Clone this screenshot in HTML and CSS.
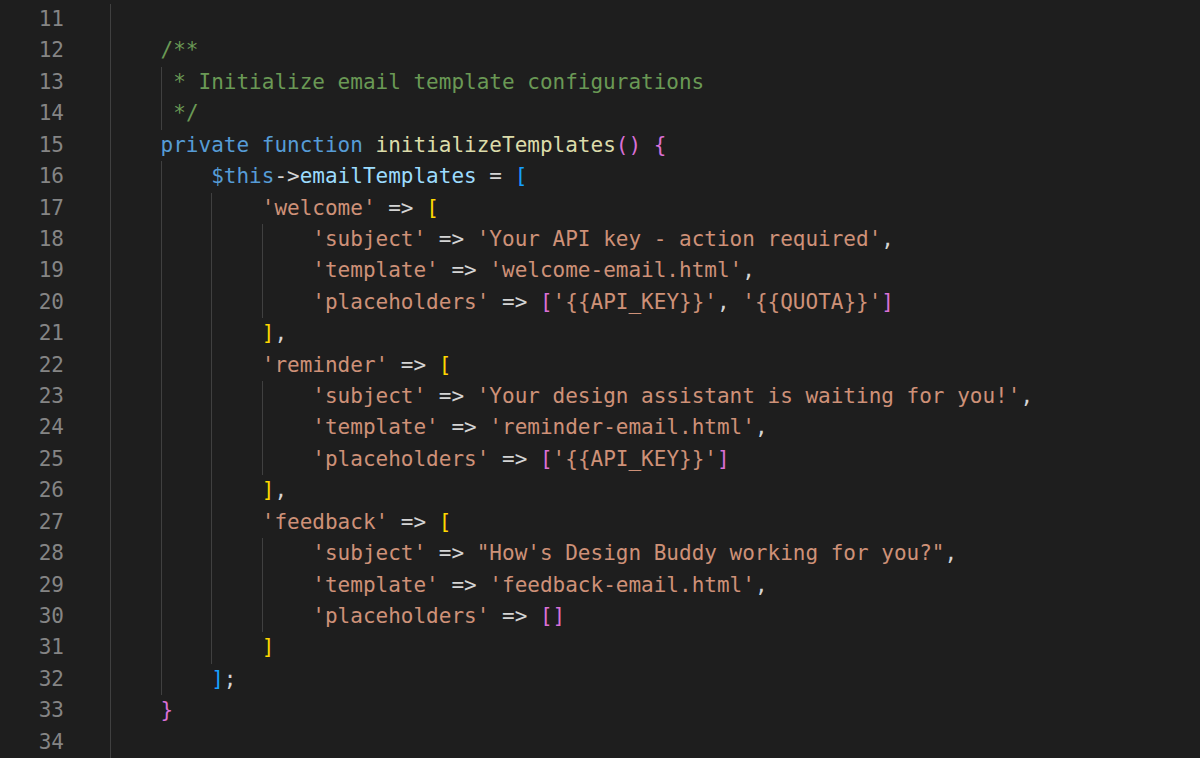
FILE: index.html
```html
<!DOCTYPE html>
<html>
<head>
<meta charset="utf-8">
<link rel="stylesheet" href="styles.css">
</head>
<body>
<div class="editor">
  <div class="gutter">
    <div class="ln">11</div><div class="ln">12</div><div class="ln">13</div><div class="ln">14</div>
    <div class="ln">15</div><div class="ln">16</div><div class="ln">17</div><div class="ln">18</div>
    <div class="ln">19</div><div class="ln">20</div><div class="ln">21</div><div class="ln">22</div>
    <div class="ln">23</div><div class="ln">24</div><div class="ln">25</div><div class="ln">26</div>
    <div class="ln">27</div><div class="ln">28</div><div class="ln">29</div><div class="ln">30</div>
    <div class="ln">31</div><div class="ln">32</div><div class="ln">33</div><div class="ln">34</div>
  </div>
  <div class="code">
<div class="line"><span class="ind">    </span></div>
<div class="line"><span class="ind">    </span><span class="cm">/**</span></div>
<div class="line"><span class="ind">    </span><span class="ind"> </span><span class="cm">* Initialize email template configurations</span></div>
<div class="line"><span class="ind">    </span><span class="ind"> </span><span class="cm">*/</span></div>
<div class="line"><span class="ind">    </span><span class="kw">private</span> <span class="kw">function</span> <span class="fn">initializeTemplates</span><span class="b2">()</span> <span class="b2">{</span></div>
<div class="line"><span class="ind">    </span><span class="ind">    </span><span class="kw">$this</span><span class="op">-&gt;</span><span class="var">emailTemplates</span> <span class="op">=</span> <span class="b3">[</span></div>
<div class="line"><span class="ind">    </span><span class="ind">    </span><span class="ind">    </span><span class="str">'welcome'</span> <span class="op">=&gt;</span> <span class="b1">[</span></div>
<div class="line"><span class="ind">    </span><span class="ind">    </span><span class="ind">    </span><span class="ind">    </span><span class="str">'subject'</span> <span class="op">=&gt;</span> <span class="str">'Your API key - action required'</span><span class="op">,</span></div>
<div class="line"><span class="ind">    </span><span class="ind">    </span><span class="ind">    </span><span class="ind">    </span><span class="str">'template'</span> <span class="op">=&gt;</span> <span class="str">'welcome-email.html'</span><span class="op">,</span></div>
<div class="line"><span class="ind">    </span><span class="ind">    </span><span class="ind">    </span><span class="ind">    </span><span class="str">'placeholders'</span> <span class="op">=&gt;</span> <span class="b2">[</span><span class="str">'{{API_KEY}}'</span><span class="op">,</span> <span class="str">'{{QUOTA}}'</span><span class="b2">]</span></div>
<div class="line"><span class="ind">    </span><span class="ind">    </span><span class="ind">    </span><span class="b1">]</span><span class="op">,</span></div>
<div class="line"><span class="ind">    </span><span class="ind">    </span><span class="ind">    </span><span class="str">'reminder'</span> <span class="op">=&gt;</span> <span class="b1">[</span></div>
<div class="line"><span class="ind">    </span><span class="ind">    </span><span class="ind">    </span><span class="ind">    </span><span class="str">'subject'</span> <span class="op">=&gt;</span> <span class="str">'Your design assistant is waiting for you!'</span><span class="op">,</span></div>
<div class="line"><span class="ind">    </span><span class="ind">    </span><span class="ind">    </span><span class="ind">    </span><span class="str">'template'</span> <span class="op">=&gt;</span> <span class="str">'reminder-email.html'</span><span class="op">,</span></div>
<div class="line"><span class="ind">    </span><span class="ind">    </span><span class="ind">    </span><span class="ind">    </span><span class="str">'placeholders'</span> <span class="op">=&gt;</span> <span class="b2">[</span><span class="str">'{{API_KEY}}'</span><span class="b2">]</span></div>
<div class="line"><span class="ind">    </span><span class="ind">    </span><span class="ind">    </span><span class="b1">]</span><span class="op">,</span></div>
<div class="line"><span class="ind">    </span><span class="ind">    </span><span class="ind">    </span><span class="str">'feedback'</span> <span class="op">=&gt;</span> <span class="b1">[</span></div>
<div class="line"><span class="ind">    </span><span class="ind">    </span><span class="ind">    </span><span class="ind">    </span><span class="str">'subject'</span> <span class="op">=&gt;</span> <span class="str">"How's Design Buddy working for you?"</span><span class="op">,</span></div>
<div class="line"><span class="ind">    </span><span class="ind">    </span><span class="ind">    </span><span class="ind">    </span><span class="str">'template'</span> <span class="op">=&gt;</span> <span class="str">'feedback-email.html'</span><span class="op">,</span></div>
<div class="line"><span class="ind">    </span><span class="ind">    </span><span class="ind">    </span><span class="ind">    </span><span class="str">'placeholders'</span> <span class="op">=&gt;</span> <span class="b2">[]</span></div>
<div class="line"><span class="ind">    </span><span class="ind">    </span><span class="ind">    </span><span class="b1">]</span></div>
<div class="line"><span class="ind">    </span><span class="ind">    </span><span class="b3">]</span><span class="op">;</span></div>
<div class="line"><span class="ind">    </span><span class="b2">}</span></div>
<div class="line"><span class="ind">    </span></div>
  </div>
</div>
</body>
</html>
```

FILE: styles.css
```css
html, body {
  margin: 0;
  padding: 0;
  background: #1e1e1e;
  height: 100%;
  overflow: hidden;
}

.editor {
  display: flex;
  padding-top: 4px;
  font-family: "DejaVu Sans Mono", "Liberation Mono", monospace;
  font-size: 21px;
  line-height: 31.43px;
  color: #d4d4d4;
}

.gutter {
  width: 110px;
  flex: none;
}

.ln {
  width: 64px;
  text-align: right;
  color: #858585;
  height: 31.43px;
}

.code {
  flex: 1;
}

.line {
  height: 31.43px;
  white-space: pre;
}

.ind {
  display: inline-block;
  box-shadow: inset 1px 0 0 #404040;
  height: 31.43px;
  vertical-align: top;
}

.cm { color: #6a9955; }
.kw { color: #569cd6; }
.fn { color: #dcdcaa; }
.var { color: #9cdcfe; }
.str { color: #ce9178; }
.op { color: #d4d4d4; }
.b1 { color: #ffd700; }
.b2 { color: #da70d6; }
.b3 { color: #179fff; }
```
